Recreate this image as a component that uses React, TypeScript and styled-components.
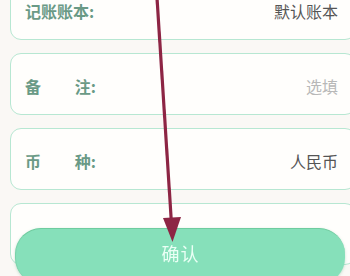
import React from "react";
import styled, { createGlobalStyle } from "styled-components";

const GlobalStyle = createGlobalStyle`
  html, body {
    margin: 0;
    padding: 0;
    background: #faf8f5;
    overflow: hidden;
  }
  body {
    font-family: "Noto Sans CJK SC", "Noto Sans", sans-serif;
  }
`;

const Page = styled.div`
  width: 350px;
  height: 276px;
  overflow: hidden;
  padding-left: 10px;
  box-sizing: border-box;
`;

const List = styled.div`
  display: flex;
  flex-direction: column;
  gap: 13px;
  margin-top: -22px;
  margin-right: -6px;
`;

const Card = styled.div`
  height: 62px;
  box-sizing: border-box;
  border: 1.5px solid #b7e7d2;
  border-radius: 11px;
  background: #fffefc;
  display: flex;
  align-items: center;
  justify-content: space-between;
  padding: 3px 17px 0 14px;
`;

const Label = styled.div`
  width: 71px;
  display: flex;
  justify-content: space-between;
  font-size: 16px;
  font-weight: 700;
  color: #6a9a86;
`;

const Value = styled.div<{ $muted?: boolean }>`
  font-size: 16px;
  color: ${(p) => (p.$muted ? "#b8b8b8" : "#555555")};
`;

const Footer = styled.div`
  position: fixed;
  left: 15px;
  right: 5px;
  top: 228px;
  height: 56px;
`;

const ConfirmButton = styled.button`
  width: 100%;
  height: 100%;
  box-sizing: border-box;
  border: none;
  border-top: 1.5px solid #6fcc9f;
  border-left: 1px solid #79d3aa;
  border-radius: 26px;
  background: #86e0ba;
  box-shadow: 0 1px 3px rgba(90, 170, 130, 0.35);
  color: #eafff5;
  font-family: "Noto Sans CJK SC", sans-serif;
  font-size: 18px;
  letter-spacing: 1px;
  padding: 0 0 8px 0;
`;

const Overlay = styled.svg`
  position: fixed;
  left: 0;
  top: 0;
  pointer-events: none;
`;

const rows = [
  { label: ["记账账本:"], value: "默认账本" },
  { label: ["备", "注:"], value: "选填", muted: true },
  { label: ["币", "种:"], value: "人民币" },
];

export default function App() {
  return (
    <Page>
      <GlobalStyle />
      <List>
        {rows.map((r) => (
          <Card key={r.value}>
            <Label>
              {r.label.map((part) => (
                <span key={part}>{part}</span>
              ))}
            </Label>
            <Value $muted={r.muted}>{r.value}</Value>
          </Card>
        ))}
        <Card />
      </List>
      <Footer>
        <ConfirmButton>确认</ConfirmButton>
      </Footer>
      <Overlay width="350" height="276" viewBox="0 0 350 276">
        <line x1="157" y1="-2" x2="171.5" y2="224" stroke="#8d2544" strokeWidth="3.2" />
        <polygon points="163,218 181,217 172.5,242" fill="#8d2544" />
      </Overlay>
    </Page>
  );
}
